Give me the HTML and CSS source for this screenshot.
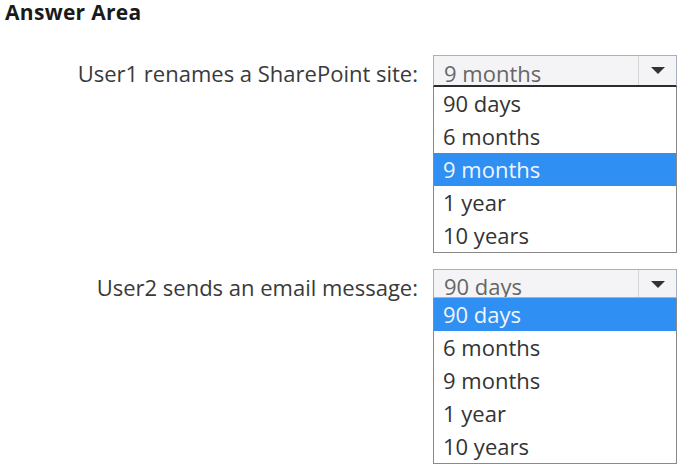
FILE: index.html
```html
<!DOCTYPE html>
<html lang="en">
<head>
    <meta charset="UTF-8">
    <title>Answer Area</title>
    <link rel="stylesheet" href="styles.css">
</head>
<body>
    <h2 class="title">Answer Area</h2>

    <div class="answers">
        <div class="row">
            <span class="label">User1 renames a SharePoint site:</span>
            <div class="dropdown">
                <div class="select">
                    <span class="value">9 months</span>
                    <span class="toggle"><span class="arrow"></span></span>
                </div>
                <ul class="options">
                    <li>90 days</li>
                    <li>6 months</li>
                    <li class="selected">9 months</li>
                    <li>1 year</li>
                    <li>10 years</li>
                </ul>
            </div>
        </div>

        <div class="row">
            <span class="label">User2 sends an email message:</span>
            <div class="dropdown second">
                <div class="select">
                    <span class="value">90 days</span>
                    <span class="toggle"><span class="arrow"></span></span>
                </div>
                <ul class="options">
                    <li class="selected">90 days</li>
                    <li>6 months</li>
                    <li>9 months</li>
                    <li>1 year</li>
                    <li>10 years</li>
                </ul>
            </div>
        </div>
    </div>
</body>
</html>
```

FILE: styles.css
```css
body {
    margin: 0;
    background: #fff;
    color: #333;
    font-family: "Open Sans", "Noto Sans", sans-serif;
}

.title {
    margin: 0;
    padding: 0 0 0 5px;
    font-size: 21px;
    font-weight: 700;
    letter-spacing: 0.3px;
    line-height: 24px;
    color: #1a1a1a;
}

.answers {
    display: flex;
    flex-direction: column;
    gap: 16px;
    padding-top: 31px;
}

.row {
    display: flex;
    align-items: flex-start;
}

.label {
    width: 418px;
    text-align: right;
    font-size: 22px;
    line-height: 30px;
    padding-top: 3px;
    color: #3a3a3a;
}

.dropdown {
    margin-left: 15px;
    width: 244px;
}

.select {
    display: flex;
    height: 29px;
    border: 1px solid #a9b0c0;
    border-bottom: 2px solid #2c2c2c;
    background: #f4f4f6;
    overflow: hidden;
}

.second .select {
    height: 27px;
    border-bottom: 1px solid #b0b0b0;
}

.value {
    flex: 1;
    padding-left: 10px;
    font-size: 22px;
    line-height: 34px;
    color: #666;
}

.second .value {
    line-height: 32px;
}

.toggle {
    width: 38px;
    border-left: 1px solid #d6d6d6;
    display: flex;
    justify-content: center;
    padding-top: 11px;
    box-sizing: border-box;
}

.arrow {
    width: 0;
    height: 0;
    border-left: 7px solid transparent;
    border-right: 7px solid transparent;
    border-top: 7px solid #333;
}

.options {
    list-style: none;
    margin: 0;
    padding: 0;
    border: 1px solid #8a8a8a;
    border-top: none;
    background: #fff;
}

.options li {
    height: 33px;
    padding-left: 9px;
    font-size: 22px;
    line-height: 32px;
    color: #333;
}

.options li.selected {
    background: #2f8ff3;
    color: #f0f6ff;
}
```
